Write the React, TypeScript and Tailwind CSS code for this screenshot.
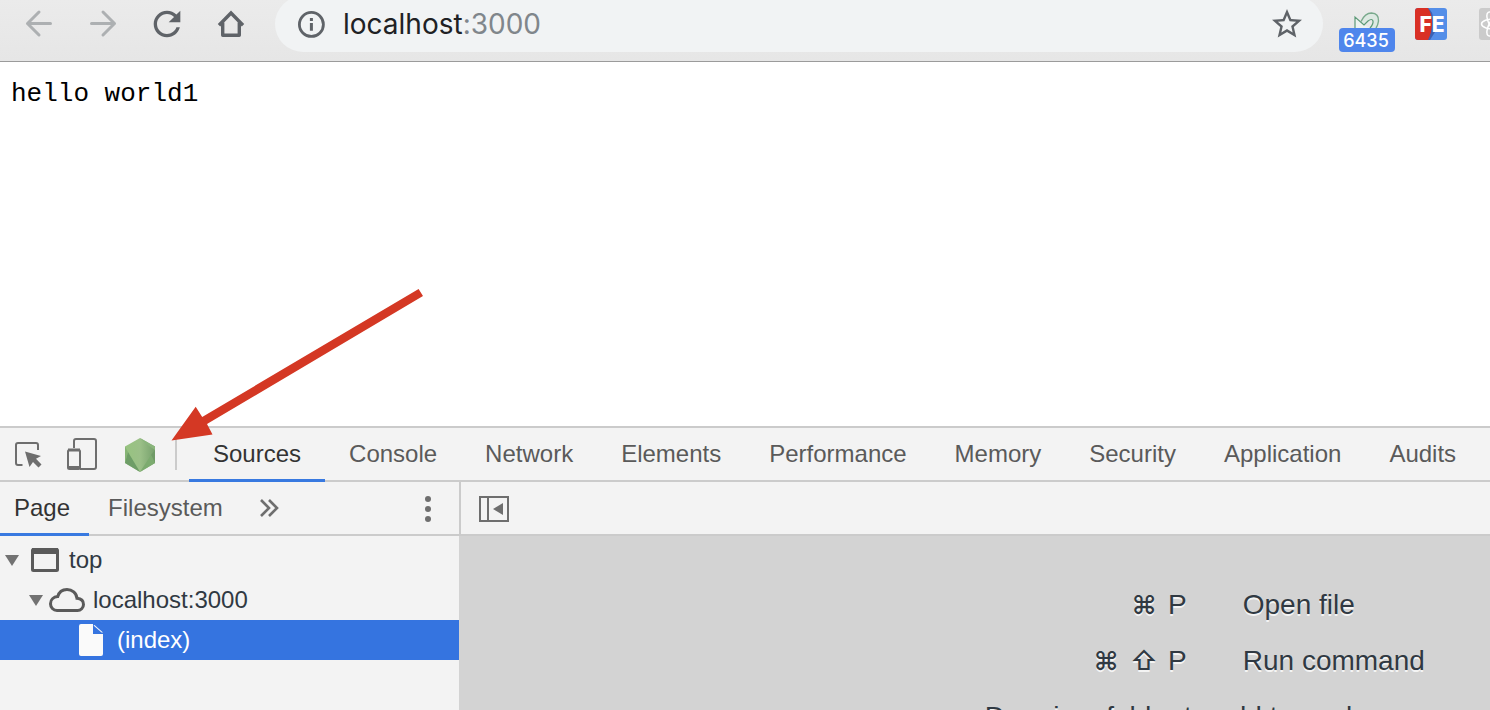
import type { ReactNode } from "react";

const REFRESH_PATH =
  "M17.65 6.35C16.2 4.9 14.21 4 12 4c-4.42 0-7.99 3.58-7.99 8s3.57 8 7.99 8c3.73 0 6.84-2.55 7.73-6h-2.08c-.82 2.33-3.04 4-5.65 4-3.31 0-6-2.69-6-6s2.69-6 6-6c1.66 0 3.14.69 4.22 1.78L13 11h7V4l-2.35 2.35z";
const STAR_PATH =
  "M22 9.24l-7.19-.62L12 2 9.19 8.63 2 9.24l5.46 4.73L5.82 21 12 17.27 18.18 21l-1.63-7.03L22 9.24zM12 15.4l-3.76 2.27 1-4.28-3.32-2.88 4.38-.38L12 6.1l1.71 4.04 4.38.38-3.32 2.88 1 4.28L12 15.4z";

function ToolButton({ label, children, disabled }: { label: string; children: ReactNode; disabled?: boolean }) {
  return (
    <button
      type="button"
      aria-label={label}
      disabled={disabled}
      className="flex h-14 w-16 shrink-0 items-center justify-center text-[#5f6368] disabled:text-[#adb0b2]"
    >
      {children}
    </button>
  );
}

function BrowserToolbar() {
  return (
    <header className="h-[62px] shrink-0 border-b border-[#9b9b9b] bg-linear-to-b from-[#ebebeb] to-[#e6e6e6]">
      <div className="-mt-1 flex items-center pl-[7px]">
        <ToolButton label="Back" disabled>
          <svg className="size-8" viewBox="0 0 32 32" fill="none" stroke="currentColor" strokeWidth="3" strokeLinecap="round" strokeLinejoin="round">
            <path d="M27.500 15.500H4.500M16 4L4.500 15.500L16 27" />
          </svg>
        </ToolButton>
        <ToolButton label="Forward" disabled>
          <svg className="size-8" viewBox="0 0 32 32" fill="none" stroke="currentColor" strokeWidth="3" strokeLinecap="round" strokeLinejoin="round">
            <path d="M4.500 15.500h23M16 4L27.500 15.500L16 27" />
          </svg>
        </ToolButton>
        <ToolButton label="Reload">
          <svg className="size-10" viewBox="0 0 24 24" fill="currentColor">
            <path d={REFRESH_PATH} />
          </svg>
        </ToolButton>
        <ToolButton label="Home">
          <svg className="size-8" viewBox="0 0 32 32" fill="none" stroke="currentColor" strokeWidth="3.4">
            <path d="M4 17.300L16 5L28 17.300" />
            <path d="M7.700 14.500V27.300H24.300V14.500" strokeLinejoin="round" />
          </svg>
        </ToolButton>
        <div className="ml-3 mr-3 flex h-14 min-w-0 flex-1 items-center rounded-full bg-[#f1f3f4] pl-5 pr-[18px]">
          <button type="button" aria-label="View site information" className="mr-4 text-[#5f6368]">
            <svg className="size-8" viewBox="0 0 32 32" fill="none" stroke="currentColor">
              <circle cx="16.400" cy="16.400" r="12" strokeWidth="2.800" />
              <path d="M16.400 15v7.800M16.400 9.900v3" strokeWidth="3" />
            </svg>
          </button>
          <a href="#localhost" className="flex-1 truncate font-[Inter,sans-serif] text-[28px] leading-9 text-[#202124]">
            localhost<span className="text-[#80868b]">:3000</span>
          </a>
          <button type="button" aria-label="Bookmark this page" className="text-[#5f6368]">
            <svg className="size-9" viewBox="0 0 24 24" fill="currentColor">
              <path d={STAR_PATH} />
            </svg>
          </button>
        </div>
        <button type="button" aria-label="Mail checker" className="relative flex h-14 w-16 shrink-0 items-start justify-center pt-4">
          <svg className="h-7 w-8" viewBox="0 0 32 28" fill="none">
            <path d="M4 5L13 13L17 9Q21 6 22 9Q22.500 12 19 16H25Q28 12 28 8Q28 1 20 1Q14 1 10.500 8.500L10 9.500Z" fill="#dde9e2" />
            <path d="M4 5V16H19L13 13Z" fill="#eef3f0" />
            <path d="M4 16V5L13 13L17 9Q21 6 22 9Q22.500 12 19 16" stroke="#5d9a78" strokeWidth="1.200" />
            <path d="M10 9.500Q14 1 20.500 1Q28 1.500 27.500 9Q27 13 25 16" stroke="#79a98c" strokeWidth="1.400" />
          </svg>
          <span className="absolute inset-x-1 bottom-0 h-6 rounded-sm bg-[#4f86ec] pr-0.5 text-center font-[Inter,sans-serif] text-lg leading-[26px] font-medium text-white">
            6435
          </span>
        </button>
        <ToolButton label="FE helper">
          <svg className="size-8" viewBox="0 0 32 32">
            <defs>
              <clipPath id="fe-tile">
                <rect width="32" height="32" rx="3" />
              </clipPath>
            </defs>
            <g clipPath="url(#fe-tile)">
              <rect width="32" height="32" fill="#548ee8" />
              <path d="M13 0Q18 4 18 10L20 24L15 32H11Z" fill="#3c62b4" />
              <path d="M0 0H13Q17 6 17 15Q17 24 13 32H0Z" fill="#d93025" />
              <text x="17" y="23.500" textAnchor="middle" fill="#fff" fontFamily="Inter, sans-serif" fontWeight="800" fontSize="21">
                FE
              </text>
            </g>
          </svg>
        </ToolButton>
        <button type="button" aria-label="React Developer Tools" className="h-14 w-[27px] shrink-0 overflow-hidden pl-4">
          <svg className="size-8 max-w-none" viewBox="0 0 32 32" fill="none" stroke="#fff" strokeWidth="1.500">
            <rect width="32" height="32" rx="3" fill="#cbcbcb" stroke="none" />
            <ellipse cx="16" cy="16" rx="13.500" ry="5.200" />
            <ellipse cx="16" cy="16" rx="13.500" ry="5.200" transform="rotate(60 16 16)" />
            <ellipse cx="16" cy="16" rx="13.500" ry="5.200" transform="rotate(120 16 16)" />
            <circle cx="16" cy="16" r="2.500" fill="#fff" />
          </svg>
        </button>
      </div>
    </header>
  );
}

const panels = ["Sources", "Console", "Network", "Elements", "Performance", "Memory", "Security", "Application", "Audits"];

function PanelTabs() {
  return (
    <div className="flex h-[54px] shrink-0 border-b-2 border-[#cbcbcb] text-[#6e6e6e]">
      <div className="flex shrink-0 items-center">
        <button type="button" aria-label="Inspect element" className="ml-3">
          <svg className="size-8" viewBox="0 0 32 32" fill="none" stroke="currentColor" strokeWidth="2">
            <path d="M10.500 27H6Q4 27 4 25V7Q4 5 6 5H24Q26 5 26 7V12" />
            <path d="M13 13.500L29 18L24 20.700L29.500 26.500L26.500 29.500L21 24L17.500 29Z" fill="currentColor" stroke="none" />
          </svg>
        </button>
        <button type="button" aria-label="Toggle device toolbar" className="ml-[22px]">
          <svg className="size-8" viewBox="0 0 32 32" fill="none" stroke="currentColor" strokeWidth="2">
            <path d="M8 10V3Q8 1 10 1H28Q30 1 30 3V29Q30 31 28 31H14" />
            <rect x="2" y="12" width="12" height="19" rx="1.500" />
            <path d="M2 12H14M2 29.500H14" strokeWidth="3" />
          </svg>
        </button>
        <button type="button" aria-label="Open dedicated DevTools for Node.js" className="ml-6">
          <svg className="h-9 w-9" viewBox="0 0 36 36">
            <defs>
              <linearGradient id="node-face" x1="0" x2="1">
                <stop offset="0" stopColor="#97c380" />
                <stop offset="0.5" stopColor="#9bc088" />
                <stop offset="1" stopColor="#76a06c" />
              </linearGradient>
            </defs>
            <path d="M18 2L33 10.500V27L18 36L3 27V10.500Z" fill="url(#node-face)" />
            <path d="M3 10.500L6 16L3 27Z" fill="#86b475" />
            <path d="M6 16L18 36L3 27Z" fill="#6e9d67" />
            <path d="M18 2L33 10.500V14L24 8Z" fill="#8ab57c" />
            <path d="M33 14L29 19L33 27Z" fill="#6f9a66" />
            <path d="M29 19L33 27L18 36Z" fill="#7cab6f" />
          </svg>
        </button>
        <span className="ml-[17px] mr-3 h-8 w-0.5 bg-[#cbcbcb]" />
      </div>
      <nav aria-label="Panels" className="flex min-w-0 text-2xl text-[#5a5a5a]">
        {panels.map((name, i) => (
          <button
            key={name}
            type="button"
            className={
              i === 0
                ? "-mb-0.5 shrink-0 border-b-3 border-[#3879e0] px-6 pt-px text-[#333333]"
                : "-mb-0.5 shrink-0 border-b-3 border-transparent px-6 pt-px"
            }
          >
            {name}
          </button>
        ))}
      </nav>
    </div>
  );
}

function Triangle() {
  return (
    <svg className="h-3 w-3.5 shrink-0 text-[#727272]" viewBox="0 0 14 12" fill="currentColor">
      <path d="M0 1H14L7 12Z" />
    </svg>
  );
}

function Navigator() {
  return (
    <aside className="flex w-[459px] shrink-0 flex-col">
      <div className="flex h-[54px] border-b-2 border-[#cbcbcb] text-2xl text-[#5a5a5a]">
        <button type="button" className="-mb-0.5 border-b-3 border-[#3879e0] pl-3.5 pr-[19px] pt-px text-[#333333]">
          Page
        </button>
        <button type="button" className="-mb-0.5 border-b-3 border-transparent px-[19px] pt-px">
          Filesystem
        </button>
        <button type="button" aria-label="More tabs" className="ml-3.5 pt-0.5">
          <svg className="size-6" viewBox="0 0 24 24" fill="none" stroke="#6e6e6e" strokeWidth="2.600">
            <path d="M5 3L13 11L5 19M13 3L21 11L13 19" />
          </svg>
        </button>
        <button type="button" aria-label="More options" className="ml-auto mr-[23px] pt-0.5">
          <svg className="h-8 w-4" viewBox="0 0 16 32" fill="#6e6e6e">
            <circle cx="8" cy="6" r="3" />
            <circle cx="8" cy="16" r="3" />
            <circle cx="8" cy="26" r="3" />
          </svg>
        </button>
      </div>
      <ul role="tree" className="pt-1 text-2xl text-[#303942]">
        <li role="treeitem" className="flex h-10 items-center pl-[5px]">
          <Triangle />
          <svg className="ml-3 mr-2.5 h-6 w-7 shrink-0" viewBox="0 0 28 24" fill="none" stroke="#5a5a5a">
            <rect x="1.500" y="1.500" width="25" height="21" rx="1" strokeWidth="3" />
            <path d="M1 3H27" strokeWidth="6" />
          </svg>
          top
        </li>
        <li role="treeitem" className="flex h-10 items-center pl-[29px]">
          <Triangle />
          <svg className="ml-1.5 mr-2 h-6 w-9 shrink-0" viewBox="0 0 36 24" fill="none" stroke="#5a5a5a" strokeWidth="3">
            <path d="M8 22.500H28.500A6 6 0 0 0 34.500 16.500C34.500 13 32 10.700 28 10.300C27.500 5 23 1.500 18 1.500C13.500 1.500 10 4 8.700 8.600C4.500 9 1.500 11.800 1.500 15.700A6.700 6.700 0 0 0 8 22.500Z" />
          </svg>
          localhost:3000
        </li>
        <li role="treeitem" aria-selected="true" className="flex h-10 items-center bg-[#3574e0] pl-[79px] text-white">
          <svg className="mr-3.5 h-8 w-6 shrink-0" viewBox="0 0 24 32" fill="#fafafa">
            <path d="M2 0H14V10H24V30Q24 32 22 32H2Q0 32 0 30V2Q0 0 2 0Z" />
            <path d="M15.500 1L24 8.500H22.500L14.500 1.500Z" />
          </svg>
          (index)
        </li>
      </ul>
    </aside>
  );
}

const shortcuts = [
  { keys: ["⌘", "P"], action: "Open file" },
  { keys: ["⌘", "⇧", "P"], action: "Run command" },
];

function EditorPane() {
  return (
    <section className="flex min-w-0 flex-1 flex-col">
      <div className="flex h-[54px] shrink-0 items-center border-b-2 border-l-2 border-[#cbcbcb] pl-[17px]">
        <button type="button" aria-label="Hide navigator" className="pt-0.5">
          <svg className="h-7 w-8" viewBox="0 0 32 28" fill="none" stroke="#6e6e6e" strokeWidth="2">
            <path d="M2 2H30V26H2ZM10 2V26" />
            <path d="M25 8V20L15 14Z" fill="#6e6e6e" stroke="none" />
          </svg>
        </button>
      </div>
      <div className="flex-1 overflow-hidden bg-[#d3d3d3] pt-[41px] text-[28px] leading-14 text-[#303942] text-shadow-[0_2px_0_#ffffffbf]">
        {shortcuts.map(({ keys, action }) => (
          <div key={action} className="grid grid-cols-[12fr_5fr]">
            <div className="flex justify-end gap-2.5">
              {keys.map((key) => (
                <kbd
                  key={key}
                  className={
                    key === "P"
                      ? "font-[Liberation_Sans,sans-serif]"
                      : "w-7 text-center font-[Inter,sans-serif] text-[26px] leading-14 font-medium"
                  }
                >
                  {key}
                </kbd>
              ))}
            </div>
            <div className="whitespace-nowrap pl-14">{action}</div>
          </div>
        ))}
        <p className="whitespace-nowrap pl-[51%]">Drop in a folder to add to workspace</p>
      </div>
    </section>
  );
}

function PointerArrow() {
  return (
    <svg className="pointer-events-none absolute -top-[140px] left-[171px] h-[154px] w-[254px]" viewBox="0 0 254 154" fill="#d43824" aria-hidden="true">
      <path d="M0.500 152.500L24.700 118.700L31.200 129L247.600 1L252 8L36 136L41.500 146.500Z" />
    </svg>
  );
}

export default function App() {
  return (
    <div className="flex h-screen flex-col overflow-hidden bg-white font-[Liberation_Sans,Arial,sans-serif]">
      <BrowserToolbar />
      <main className="min-h-0 flex-1 px-[11px] py-4">
        <pre className="font-[Liberation_Mono,monospace] text-[26px] leading-8 text-black">hello world1</pre>
      </main>
      <div className="relative flex h-[284px] shrink-0 flex-col border-t-2 border-[#cbcbcb] bg-[#f3f3f3]">
        <PanelTabs />
        <div className="flex min-h-0 flex-1">
          <Navigator />
          <EditorPane />
        </div>
        <PointerArrow />
      </div>
    </div>
  );
}
